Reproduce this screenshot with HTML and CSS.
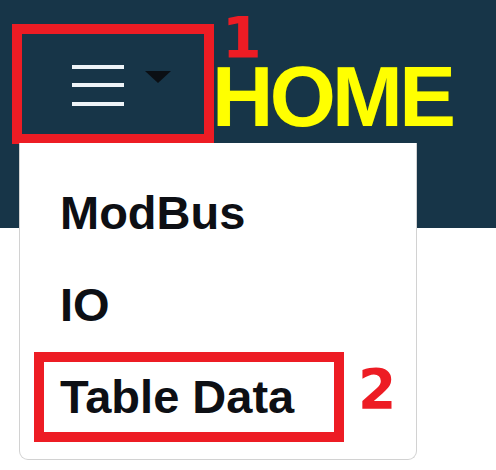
FILE: index.html
```html
<!DOCTYPE html>
<html lang="en">
<head>
<meta charset="utf-8">
<title>HOME</title>
<link rel="stylesheet" href="styles.css">
</head>
<body>
<header class="topbar">
  <button class="toggle" type="button" aria-label="Menu">
    <svg class="burger" width="52" height="42" viewBox="0 0 52 42" aria-hidden="true">
      <rect x="0" y="0" width="52" height="4" fill="#eef3f7"/>
      <rect x="0" y="18" width="52" height="4" fill="#eef3f7"/>
      <rect x="0" y="37" width="52" height="4" fill="#eef3f7"/>
    </svg>
    <svg class="caret" width="26" height="12" viewBox="0 0 26 12" aria-hidden="true">
      <polygon points="0,0 26,0 13,12" fill="#0b0f14"/>
    </svg>
  </button>
  <h1 class="title">HOME</h1>
  <span class="note note-1">1</span>
</header>
<nav class="dropdown">
  <ul class="menu">
    <li class="row"><a class="item">ModBus</a></li>
    <li class="row"><a class="item">IO</a></li>
    <li class="row"><a class="item item-marked">Table Data</a><span class="note note-2">2</span></li>
  </ul>
</nav>
</body>
</html>
```
FILE: styles.css
```css
* { box-sizing: border-box; }
html, body { margin: 0; padding: 0; background: #ffffff; }
body { width: 496px; height: 470px; overflow: hidden; position: relative; font-family: "Liberation Sans", Arial, sans-serif; }

.topbar {
  position: relative;
  height: 228px;
  background: #173548;
  display: flex;
  align-items: flex-start;
  padding: 24px 0 0 12px;
}

.toggle {
  width: 202px;
  height: 120px;
  border: 10px solid #ed1c24;
  background: #173548;
  margin: 0;
  padding: 31px 0 0 50px;
  display: flex;
  align-items: flex-start;
  cursor: pointer;
}
.burger { display: block; }
.caret { display: block; margin: 6px 0 0 21px; }

.title {
  margin: 43px 0 0 -2px;
  font-family: "Liberation Sans", Arial, sans-serif;
  font-weight: 700;
  font-size: 85px;
  line-height: 60px;
  letter-spacing: -3.7px;
  color: #ffff00;
  text-shadow: 0 0 1px #4a6a10;
}

.note {
  font-family: "DejaVu Sans", sans-serif;
  font-weight: 700;
  color: #ed1c24;
}
.note-1 {
  position: absolute;
  left: 222px;
  top: 19px;
  font-size: 57px;
  line-height: 38px;
}

.dropdown {
  position: absolute;
  left: 19px;
  top: 143px;
  width: 398px;
  height: 317px;
  background: #ffffff;
  border: 1px solid #d2d2d2;
  border-top: 0;
  border-radius: 0 0 9px 9px;
  padding-top: 25px;
}
.menu { list-style: none; margin: 0; padding: 0; }
.row {
  display: flex;
  align-items: baseline;
  margin: 0 0 2px 14px;
}
.item {
  display: block;
  width: 310px;
  height: 90px;
  border: 10px solid transparent;
  padding-left: 16px;
  font-weight: 700;
  font-size: 47px;
  line-height: 70px;
  color: #0d0f14;
  white-space: nowrap;
}
.item-marked { border-color: #ed1c24; }
.note-2 {
  font-size: 55px;
  line-height: 55px;
  margin-left: 14px;
  transform: translateY(-5px);
}
```
